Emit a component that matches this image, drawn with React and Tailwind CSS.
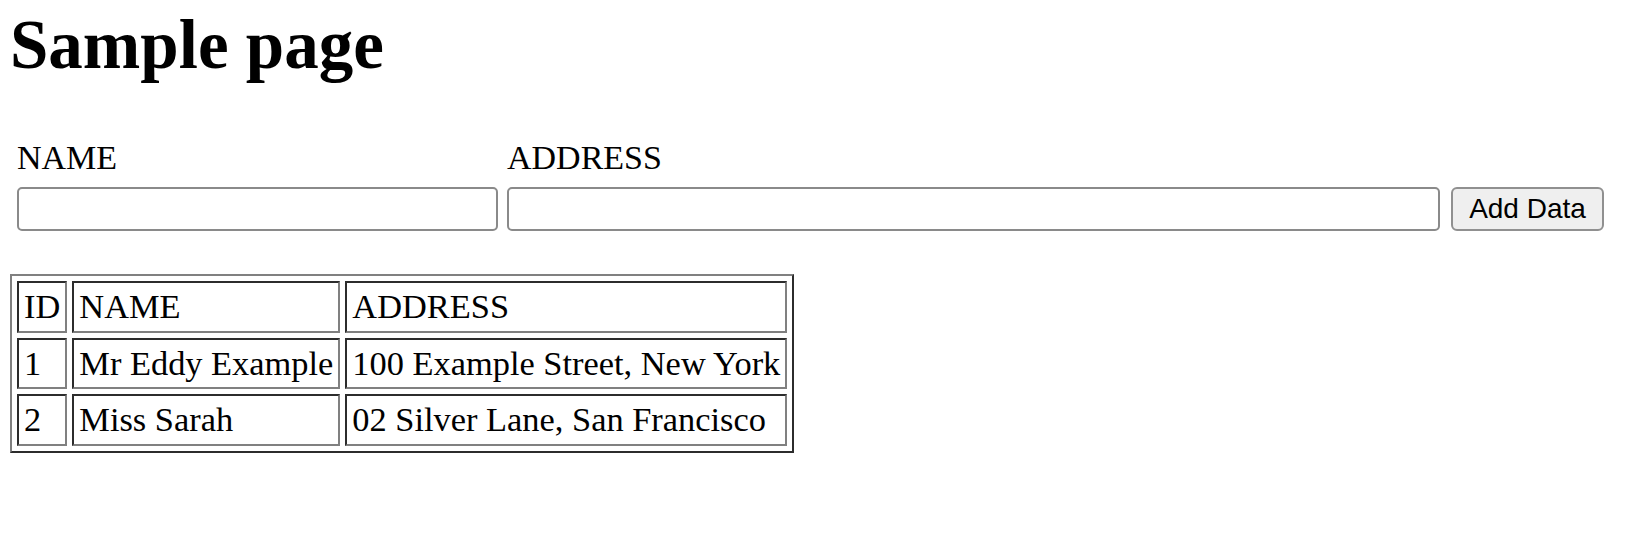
const rows = [
  { id: 1, name: 'Mr Eddy Example', address: '100 Example Street, New York' },
  { id: 2, name: 'Miss Sarah', address: '02 Silver Lane, San Francisco' },
];

function Cell({ children }) {
  return (
    <td className="border-2 border-[#808080] [border-style:inset] px-[5px] py-[4px] leading-[1.15] whitespace-nowrap">
      {children}
    </td>
  );
}

export default function App() {
  return (
    <div className="min-h-[534px] w-[1626px] bg-white px-[10px] text-black font-['Liberation_Serif',serif]">
      <h1 className="pt-[11px] text-[69px] font-bold leading-none">Sample page</h1>

      {/* form */}
      <div className="mt-[58px] flex items-end pl-[7px]">
        <div className="flex flex-col">
          <label className="text-[34px] leading-[1.15]">NAME</label>
          <input
            type="text"
            className="mt-[10px] h-[44px] w-[481px] rounded-[5px] border-2 border-[#8a8a8a] bg-white outline-none"
          />
        </div>
        <div className="ml-[9px] flex flex-col">
          <label className="text-[34px] leading-[1.15]">ADDRESS</label>
          <input
            type="text"
            className="mt-[10px] h-[44px] w-[933px] rounded-[5px] border-2 border-[#8a8a8a] bg-white outline-none"
          />
        </div>
        <button className="ml-[11px] h-[44px] w-[153px] rounded-[6px] border-2 border-[#909090] bg-[#efefef] font-['Liberation_Sans',Arial,sans-serif] text-[28px] leading-none text-black">
          Add Data
        </button>
      </div>

      {/* table */}
      <table className="mt-[43px] border-separate border-spacing-[5px] border-2 border-[#808080] [border-style:outset] text-[34.4px]">
        <thead>
          <tr>
            <Cell>ID</Cell>
            <Cell>NAME</Cell>
            <Cell>ADDRESS</Cell>
          </tr>
        </thead>
        <tbody>
          {rows.map((r) => (
            <tr key={r.id}>
              <Cell>{r.id}</Cell>
              <Cell>{r.name}</Cell>
              <Cell>{r.address}</Cell>
            </tr>
          ))}
        </tbody>
      </table>
    </div>
  );
}
